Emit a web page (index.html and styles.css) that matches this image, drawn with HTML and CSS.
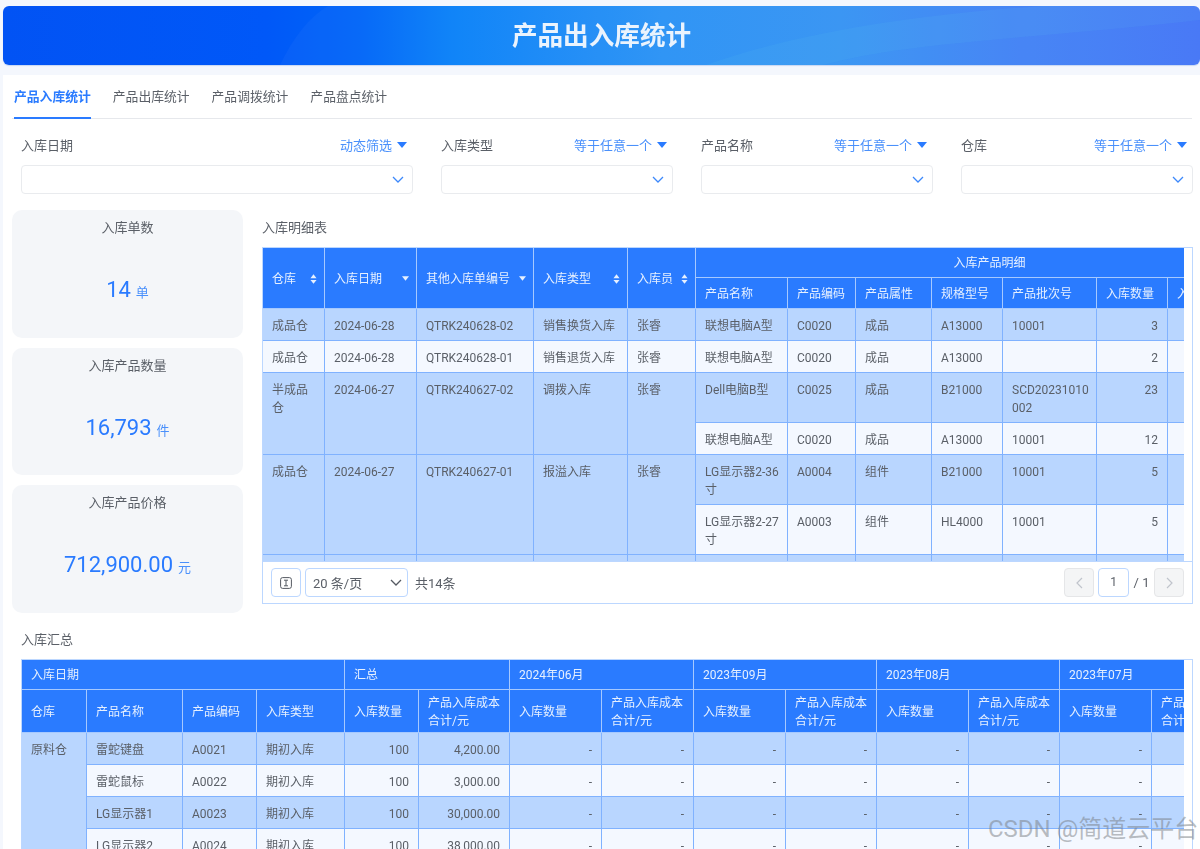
FILE: index.html
```html
<!DOCTYPE html>
<html lang="zh-CN">
<head>
<meta charset="utf-8">
<title>产品出入库统计</title>
<link rel="stylesheet" href="styles.css">
</head>
<body>
<header class="banner">
  <svg class="swoosh" viewBox="0 0 1197 59" preserveAspectRatio="none" aria-hidden="true">
    <path class="sw-a" d="M277 59C290 32 305 12 325 0H1197V59Z"/>
    <path class="sw-b" d="M703 59C800 25 920 8 1040 0H1197V14C1040 32 900 36 820 59Z"/>
    <path class="sw-c" d="M820 59C900 36 1040 32 1197 14V59Z"/>
  </svg>
  <h1 class="banner-title">产品出入库统计</h1>
</header>
<main class="panel">
  <nav class="tabs">
    <span class="tab active">产品入库统计</span>
    <span class="tab">产品出库统计</span>
    <span class="tab">产品调拨统计</span>
    <span class="tab">产品盘点统计</span>
  </nav>
  <section class="filters">
    <div class="filter">
      <div class="filter-head"><span>入库日期</span><span class="mode">动态筛选<svg class="caret" viewBox="0 0 10 6"><path d="M0 0h10L5 6z"/></svg></span></div>
      <div class="select"><svg class="chev" viewBox="0 0 12 7"><path d="M1 1l5 5 5-5"/></svg></div>
    </div>
    <div class="filter">
      <div class="filter-head"><span>入库类型</span><span class="mode">等于任意一个<svg class="caret" viewBox="0 0 10 6"><path d="M0 0h10L5 6z"/></svg></span></div>
      <div class="select"><svg class="chev" viewBox="0 0 12 7"><path d="M1 1l5 5 5-5"/></svg></div>
    </div>
    <div class="filter">
      <div class="filter-head"><span>产品名称</span><span class="mode">等于任意一个<svg class="caret" viewBox="0 0 10 6"><path d="M0 0h10L5 6z"/></svg></span></div>
      <div class="select"><svg class="chev" viewBox="0 0 12 7"><path d="M1 1l5 5 5-5"/></svg></div>
    </div>
    <div class="filter">
      <div class="filter-head"><span>仓库</span><span class="mode">等于任意一个<svg class="caret" viewBox="0 0 10 6"><path d="M0 0h10L5 6z"/></svg></span></div>
      <div class="select"><svg class="chev" viewBox="0 0 12 7"><path d="M1 1l5 5 5-5"/></svg></div>
    </div>
  </section>
  <section class="main-row">
    <aside class="cards">
      <div class="card"><div class="card-title">入库单数</div><div class="card-value"><span class="num">14</span><span class="unit">单</span></div></div>
      <div class="card"><div class="card-title">入库产品数量</div><div class="card-value"><span class="num">16,793</span><span class="unit">件</span></div></div>
      <div class="card"><div class="card-title">入库产品价格</div><div class="card-value"><span class="num">712,900.00</span><span class="unit">元</span></div></div>
    </aside>
    <div class="detail">
      <div class="sec-title">入库明细表</div>
      <div class="box">
        <div class="scroll detail-scroll">
          <table class="grid detail-table">
            <colgroup>
              <col class="c62"><col class="c92"><col class="c117"><col class="c94"><col class="c68"><col class="c92"><col class="c68"><col class="c76"><col class="c71"><col class="c94"><col class="c71"><col class="c116">
            </colgroup>
            <thead>
              <tr class="hr30">
                <th rowspan="2"><div class="th-in">仓库<svg class="sort" viewBox="0 0 8 11"><path d="M4 0l3.5 4.5h-7zM4 11L.5 6.5h7z"/></svg></div></th>
                <th rowspan="2"><div class="th-in">入库日期<svg class="sort down" viewBox="0 0 8 5"><path d="M0 0h8L4 5z"/></svg></div></th>
                <th rowspan="2"><div class="th-in">其他入库单编号<svg class="sort down" viewBox="0 0 8 5"><path d="M0 0h8L4 5z"/></svg></div></th>
                <th rowspan="2"><div class="th-in">入库类型<svg class="sort" viewBox="0 0 8 11"><path d="M4 0l3.5 4.5h-7zM4 11L.5 6.5h7z"/></svg></div></th>
                <th rowspan="2"><div class="th-in">入库员<svg class="sort" viewBox="0 0 8 11"><path d="M4 0l3.5 4.5h-7zM4 11L.5 6.5h7z"/></svg></div></th>
                <th colspan="7" class="center">入库产品明细</th>
              </tr>
              <tr class="hr31">
                <th>产品名称</th><th>产品编码</th><th>产品属性</th><th>规格型号</th><th>产品批次号</th><th>入库数量</th><th>入库单价</th>
              </tr>
            </thead>
            <tbody>
              <tr class="b"><td>成品仓</td><td>2024-06-28</td><td>QTRK240628-02</td><td>销售换货入库</td><td>张睿</td><td>联想电脑A型</td><td>C0020</td><td>成品</td><td>A13000</td><td>10001</td><td class="n">3</td><td></td></tr>
              <tr class="w"><td>成品仓</td><td>2024-06-28</td><td>QTRK240628-01</td><td>销售退货入库</td><td>张睿</td><td>联想电脑A型</td><td>C0020</td><td>成品</td><td>A13000</td><td></td><td class="n">2</td><td></td></tr>
              <tr class="b"><td rowspan="2" class="span">半成品仓</td><td rowspan="2" class="span">2024-06-27</td><td rowspan="2" class="span">QTRK240627-02</td><td rowspan="2" class="span">调拨入库</td><td rowspan="2" class="span">张睿</td><td>Dell电脑B型</td><td>C0025</td><td>成品</td><td>B21000</td><td>SCD20231010002</td><td class="n">23</td><td></td></tr>
              <tr class="w"><td>联想电脑A型</td><td>C0020</td><td>成品</td><td>A13000</td><td>10001</td><td class="n">12</td><td></td></tr>
              <tr class="b"><td rowspan="2" class="span">成品仓</td><td rowspan="2" class="span">2024-06-27</td><td rowspan="2" class="span">QTRK240627-01</td><td rowspan="2" class="span">报溢入库</td><td rowspan="2" class="span">张睿</td><td>LG显示器2-36寸</td><td>A0004</td><td>组件</td><td>B21000</td><td>10001</td><td class="n">5</td><td></td></tr>
              <tr class="w"><td>LG显示器2-27寸</td><td>A0003</td><td>组件</td><td>HL4000</td><td>10001</td><td class="n">5</td><td></td></tr>
              <tr class="b"><td></td><td></td><td></td><td></td><td></td><td></td><td></td><td></td><td></td><td></td><td></td><td></td></tr>
            </tbody>
          </table>
        </div>
        <footer class="pager">
          <div class="pager-left">
            <span class="btn"><svg class="info" viewBox="0 0 12 12"><rect x=".6" y=".6" width="10.8" height="10.8" rx="2"/><path d="M4 3.2h4M4 8.8h4M6 3.2v5.6"/></svg></span>
            <span class="size">20 条/页<svg class="chev dark" viewBox="0 0 12 7"><path d="M1 1l5 5 5-5"/></svg></span>
            <span>共14条</span>
          </div>
          <div class="pager-right">
            <span class="btn off"><svg class="arrow" viewBox="0 0 7 12"><path d="M6 1L1 6l5 5"/></svg></span>
            <span class="page-no">1</span>
            <span class="total">/ 1</span>
            <span class="btn off"><svg class="arrow" viewBox="0 0 7 12"><path d="M1 1l5 5-5 5"/></svg></span>
          </div>
        </footer>
      </div>
    </div>
  </section>
  <section class="summary">
    <div class="sec-title">入库汇总</div>
    <div class="box">
      <div class="scroll">
        <table class="grid summary-table">
          <colgroup>
            <col class="c65"><col class="c96"><col class="c74"><col class="c88"><col class="c74"><col class="c91"><col class="c92"><col class="c92"><col class="c92"><col class="c91"><col class="c92"><col class="c91"><col class="c92"><col class="c92">
          </colgroup>
          <thead>
            <tr class="hr30">
              <th colspan="4">入库日期</th><th colspan="2">汇总</th><th colspan="2">2024年06月</th><th colspan="2">2023年09月</th><th colspan="2">2023年08月</th><th colspan="2">2023年07月</th>
            </tr>
            <tr class="hr43">
              <th>仓库</th><th>产品名称</th><th>产品编码</th><th>入库类型</th>
              <th>入库数量</th><th>产品入库成本合计/元</th>
              <th>入库数量</th><th>产品入库成本合计/元</th>
              <th>入库数量</th><th>产品入库成本合计/元</th>
              <th>入库数量</th><th>产品入库成本合计/元</th>
              <th>入库数量</th><th>产品入库成本合计/元</th>
            </tr>
          </thead>
          <tbody>
            <tr class="b"><td rowspan="4" class="span">原料仓</td><td>雷蛇键盘</td><td>A0021</td><td>期初入库</td><td class="n">100</td><td class="n">4,200.00</td><td class="n">-</td><td class="n">-</td><td class="n">-</td><td class="n">-</td><td class="n">-</td><td class="n">-</td><td class="n">-</td><td class="n">-</td></tr>
            <tr class="w"><td>雷蛇鼠标</td><td>A0022</td><td>期初入库</td><td class="n">100</td><td class="n">3,000.00</td><td class="n">-</td><td class="n">-</td><td class="n">-</td><td class="n">-</td><td class="n">-</td><td class="n">-</td><td class="n">-</td><td class="n">-</td></tr>
            <tr class="b"><td>LG显示器1</td><td>A0023</td><td>期初入库</td><td class="n">100</td><td class="n">30,000.00</td><td class="n">-</td><td class="n">-</td><td class="n">-</td><td class="n">-</td><td class="n">-</td><td class="n">-</td><td class="n">-</td><td class="n">-</td></tr>
            <tr class="w"><td>LG显示器2</td><td>A0024</td><td>期初入库</td><td class="n">100</td><td class="n">38,000.00</td><td class="n">-</td><td class="n">-</td><td class="n">-</td><td class="n">-</td><td class="n">-</td><td class="n">-</td><td class="n">-</td><td class="n">-</td></tr>
          </tbody>
        </table>
      </div>
    </div>
  </section>
</main>
<div class="watermark">CSDN @简道云平台</div>
</body>
</html>
```

FILE: styles.css
```css
* { box-sizing: border-box; }
html, body { height: 849px; overflow: hidden; }
body {
  margin: 0;
  padding: 6px 0 0 3px;
  background: #f4f7fd;
  color: #5a5f67;
  font-family: Roboto, "Noto Sans CJK SC", sans-serif;
  font-size: 13px;
  position: relative;
}
svg { display: block; flex: none; }

/* banner */
.banner {
  position: relative;
  height: 59px;
  border-radius: 6px;
  overflow: hidden;
  background: linear-gradient(90deg, #0253f4 0%, #0058f8 22%, #0066f8 30%, #0a82f8 38%, #2a92f5 55%, #3593f3 70%, #4281f5 85%, #4473f6 100%);
  box-shadow: 0 1px 1px #c7d6f2;
  display: flex;
  align-items: center;
  justify-content: center;
  padding-top: 3px;
}
.swoosh { position: absolute; inset: 0; width: 100%; height: 100%; }
.sw-a { fill: #ffffff; opacity: .03; }
.sw-b { fill: #58c8f0; opacity: .12; }
.sw-c { fill: #58c8f0; opacity: .03; }
.banner-title {
  position: relative;
  margin: 0;
  font-size: 25.6px;
  line-height: 1;
  font-weight: 700;
  color: #eaf3fd;
  filter: blur(.4px);
}

/* panel */
.panel {
  margin-top: 10px;
  height: 780px;
  background: #fff;
  filter: blur(.3px);
}
.tabs {
  height: 44px;
  margin: 0 8px 0 9px;
  display: flex;
  gap: 22px;
  border-bottom: 1px solid #e6e8ec;
  padding-left: 2px;
}
.tab {
  height: 43px;
  line-height: 43px;
  font-size: 12.8px;
  white-space: nowrap;
}
.tab.active {
  color: #2a7bff;
  font-weight: 700;
  border-bottom: 2px solid #2a7bff;
  height: 44px;
}

/* filters */
.filters {
  margin-top: 15px;
  padding-left: 18px;
  display: grid;
  grid-template-columns: 392px 232px 232px 232px;
  gap: 28px;
}
.filter-head {
  display: flex;
  justify-content: space-between;
  align-items: center;
  height: 20px;
  margin-bottom: 11px;
}
.mode {
  display: flex;
  align-items: center;
  gap: 5px;
  color: #4a90fb;
  font-size: 13px;
  padding-right: 6px;
}
.caret { width: 10px; height: 6px; fill: #2a7bff; margin-top: 1px; }
.select {
  height: 29px;
  border: 1px solid #e9ebee;
  border-radius: 4px;
  display: flex;
  align-items: center;
  justify-content: flex-end;
  padding-right: 8px;
}
.chev { width: 12px; height: 7px; fill: none; stroke: #3c88fb; stroke-width: 1.3; }
.chev.dark { stroke: #555a62; }

/* main row */
.main-row {
  margin-top: 16px;
  padding-left: 9px;
  display: flex;
  gap: 19px;
}
.cards {
  width: 231px;
  height: 403px;
  display: grid;
  grid-template-rows: repeat(3, 1fr);
  gap: 10px;
}
.card {
  background: #f4f6f9;
  border-radius: 10px;
  padding-top: 9px;
  text-align: center;
  font-size: 13px;
}
.card-title { line-height: 18px; }
.card-value {
  margin-top: 33px;
  height: 40px;
  display: flex;
  justify-content: center;
  align-items: baseline;
  gap: 5px;
  color: #2a7bff;
}
.num { font-size: 22px; line-height: 40px; }
.unit { font-size: 13px; color: #4a90fb; }

.detail { width: 931px; }
.sec-title { height: 36px; line-height: 36px; margin-bottom: 1px; font-size: 13px; }
.box {
  border: 1px solid #bcd7ff;
  background: #fff;
  padding-right: 8px;
}
.scroll { overflow: hidden; }
.detail-scroll { height: 313px; }

/* tables */
.grid {
  table-layout: fixed;
  border-collapse: separate;
  border-spacing: 0;
  font-size: 12px;
  line-height: 18px;
}
.detail-table { width: 1021px; }
.summary-table { width: 1222px; }
.c62 { width: 62px; } .c65 { width: 65px; } .c68 { width: 68px; } .c71 { width: 71px; }
.c74 { width: 74px; } .c76 { width: 76px; } .c88 { width: 88px; } .c91 { width: 91px; }
.c92 { width: 92px; } .c94 { width: 94px; } .c96 { width: 96px; } .c116 { width: 116px; }
.c117 { width: 117px; }
.grid th {
  background: #2a7bff;
  color: #e6f0ff;
  font-weight: 400;
  text-align: left;
  padding: 1px 9px 0;
  border-right: 1px solid #a6c9ff;
  border-bottom: 1px solid #a6c9ff;
  vertical-align: middle;
}
.grid th.center { text-align: center; }
.hr30 { height: 30px; }
.hr31 { height: 31px; }
.hr43 { height: 43px; }
.th-in { display: flex; align-items: center; justify-content: space-between; white-space: nowrap; }
.sort { width: 7px; height: 10px; fill: #e6f0ff; margin-right: -2px; }
.sort.down { height: 5px; }
.grid td {
  padding: 8px 5px 5px 9px;
  border-right: 1px solid #80b2ff;
  border-bottom: 1px solid #80b2ff;
  vertical-align: top;
  height: 32px;
  word-break: break-all;
  color: #5a5f67;
}
.grid td.n { text-align: right; padding-right: 9px; }
.b td { background: #b9d6ff; }
.w td { background: #f4f8ff; }
.w td.span, .b td.span { background: #b9d6ff; }

/* pager */
.pager {
  margin-right: -8px;
  height: 42px;
  border-top: 1px solid #bcd7ff;
  display: flex;
  justify-content: space-between;
  align-items: center;
  padding: 0 8px;
}
.pager-left, .pager-right { display: flex; align-items: center; gap: 4px; }
.pager-left > span:last-child { margin-left: 3px; }
.btn {
  width: 30px;
  height: 29px;
  border: 1px solid #bcd7ff;
  border-radius: 4px;
  display: flex;
  align-items: center;
  justify-content: center;
}
.btn.off { background: #f4f5f6; border-color: #e5e6e8; }
.info { width: 12px; height: 12px; fill: none; stroke: #555a62; stroke-width: 1; }
.arrow { width: 7px; height: 12px; fill: none; stroke: #c0c4cc; stroke-width: 1.2; }
.size {
  width: 103px;
  height: 29px;
  border: 1px solid #bcd7ff;
  border-radius: 4px;
  display: flex;
  align-items: center;
  justify-content: space-between;
  padding: 0 5px 0 7px;
}
.page-no {
  width: 31px;
  height: 29px;
  border: 1px solid #bcd7ff;
  border-radius: 4px;
  text-align: center;
  line-height: 27px;
  font-size: 12px;
}
.total { width: 17px; text-align: center; }

/* summary */
.summary { margin-top: 9px; padding: 0 7px 0 18px; }
.summary .sec-title { height: 36px; }
.summary .box { border-bottom: 0; }

.watermark {
  position: absolute;
  left: 988px;
  top: 813px;
  font-size: 24px;
  line-height: 32px;
  white-space: nowrap;
  color: rgba(120, 125, 130, .5);
}
```
